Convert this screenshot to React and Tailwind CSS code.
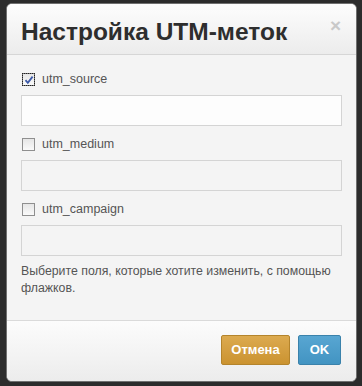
import React from 'react';

const Box = ({ checked = false }) => (
  <span className={`relative flex h-[13px] w-[13px] items-center justify-center border bg-gradient-to-b from-[#e6e6e6] to-[#fafafa] ${checked ? 'border-[#777] outline-1 outline-dotted outline-offset-[-1px] outline-[#222]' : 'border-[#8f8f8f]'}`}>
    {checked && (
      <svg width="10" height="10" viewBox="0 0 10 10">
        <path d="M1.5 5.2 L3.8 7.8 L8.6 1.6" fill="none" stroke="#3d5aa8" strokeWidth="1.8" />
      </svg>
    )}
  </span>
);

const Field = ({ label, checked, disabled }) => (
  <div>
    <label className="flex items-center gap-[7px] h-[13px] pl-[1px] text-[12.5px] text-[#555]">
      <Box checked={checked} />
      <span className="leading-none">{label}</span>
    </label>
    <div className={`mt-[9px] h-[31px] border border-[#d4d4d4] ${disabled ? 'bg-[#f4f4f4]' : 'bg-[#fdfdfd]'}`} />
  </div>
);

const App = () => (
  <div className="w-[362px] h-[386px] bg-[#2c2c2c] pl-[6px] pt-[3px]" style={{ fontFamily: '"Liberation Sans", Arial, sans-serif' }}>
    <div className="w-[351px] h-[379px] rounded-[6px] border border-[#707070] bg-[#f4f4f4] overflow-hidden flex flex-col">
      {/* Header */}
      <header className="relative h-[51px] shrink-0 border-b border-[#d6d6d6] bg-gradient-to-b from-[#fdfdfd] to-[#ececec] pl-[14px] pt-[13px]">
        <h1 className="text-[24.5px] leading-[30px] font-bold text-[#2e2e2e]">Настройка UTM-меток</h1>
        <span className="absolute right-[15px] top-[12px] text-[19px] font-bold leading-none text-[#c9c9c9]">×</span>
      </header>

      {/* Body */}
      <div className="px-[14px] pt-[18px] flex flex-col gap-[12px] h-[265px] shrink-0">
        <Field label="utm_source" checked />
        <Field label="utm_medium" disabled />
        <Field label="utm_campaign" disabled />
        <p className="-mt-[5px] text-[12.3px] leading-[17px] text-[#555]">
          Выберите поля, которые хотите изменить, с помощью флажков.
        </p>
      </div>

      {/* Footer */}
      <footer className="flex-1 border-t border-[#dadada] bg-gradient-to-b from-[#fcfcfc] to-[#ececec] flex justify-end items-start gap-[8px] pr-[15px] pt-[14px]">
        <button className="h-[30px] w-[69px] rounded-[2px] border border-[#b4842c] bg-gradient-to-b from-[#dcaa4f] to-[#cb9330] text-[13px] font-bold text-white">
          Отмена
        </button>
        <button className="h-[30px] w-[43px] rounded-[2px] border border-[#3a82ab] bg-gradient-to-b from-[#58a6d2] to-[#4294c2] text-[13px] font-bold text-white">
          OK
        </button>
      </footer>
    </div>
  </div>
);

export default App;
